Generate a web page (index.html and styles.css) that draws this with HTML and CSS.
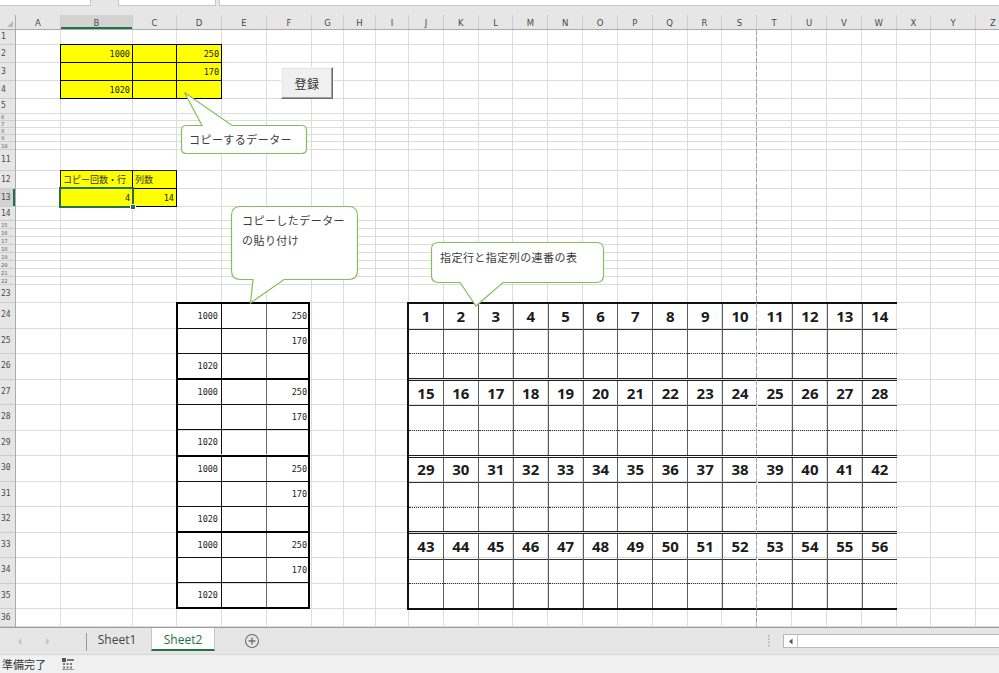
FILE: index.html
```html
<!DOCTYPE html>
<html lang="ja">
<head>
<meta charset="utf-8">
<title>Excel</title>
<link rel="stylesheet" href="styles.css">
</head>
<body>
<div class="app">
  <div class="top"><div class="box b1"></div><div class="box b2"></div><div class="box b3"></div></div>

  <div class="sheet">
    <div class="corner"><svg width="15" height="14" viewBox="0 0 15 14"><path d="M13 6 L13 12 L7 12 Z" fill="#b9b9b9"/></svg></div>

    <div class="cheads">
      <div>A</div><div class="sel">B</div><div>C</div><div>D</div><div>E</div><div>F</div><div>G</div><div>H</div><div>I</div><div>J</div><div>K</div><div>L</div><div>M</div><div>N</div><div>O</div><div>P</div><div>Q</div><div>R</div><div>S</div><div>T</div><div>U</div><div>V</div><div>W</div><div>X</div><div>Y</div><div class="zc">Z</div>
    </div>

    <div class="rheads">
      <div>1</div><div>2</div><div>3</div><div>4</div><div>5</div><div class="t">6</div><div class="t">7</div><div class="t">8</div><div class="t">9</div><div class="t">10</div><div>11</div><div>12</div><div class="sel">13</div><div>14</div><div class="t">15</div><div class="t">16</div><div class="t">17</div><div class="t">18</div><div class="t">19</div><div class="t">20</div><div class="t">21</div><div class="t">22</div><div>23</div><div>24</div><div>25</div><div>26</div><div>27</div><div>28</div><div>29</div><div>30</div><div>31</div><div>32</div><div>33</div><div>34</div><div>35</div><div>36</div>
    </div>

    <div class="hlines">
      <div></div><div></div><div></div><div></div><div></div><div></div><div></div><div></div><div></div><div></div><div></div><div></div><div></div><div></div><div></div><div></div><div></div><div></div><div></div><div></div><div></div><div></div><div></div><div></div><div></div><div></div><div></div><div></div><div></div><div></div><div></div><div></div><div></div><div></div><div></div><div></div>
    </div>

    <div class="vlines">
      <div></div><div></div><div></div><div></div><div></div><div></div><div></div><div></div><div></div><div></div><div></div><div></div><div></div><div></div><div></div><div></div><div></div><div></div><div></div><div></div><div></div><div></div><div></div><div></div><div></div><div></div>
    </div>

    <div class="yb">
      <div>1000</div><div></div><div>250</div>
      <div></div><div></div><div>170</div>
      <div>1020</div><div></div><div></div>
    </div>

    <div class="pb">
      <div class="lbl">コピー回数・行</div><div class="lbl">列数</div>
      <div>4</div><div>14</div>
    </div>

    <div class="selbox"><i class="handle"></i></div>

    <div class="lt">
      <div class="lg">
        <div class="lr"><span>1000</span><span></span><span>250</span></div>
        <div class="lr"><span></span><span></span><span>170</span></div>
        <div class="lr"><span>1020</span><span></span><span></span></div>
      </div>
      <div class="lg">
        <div class="lr"><span>1000</span><span></span><span>250</span></div>
        <div class="lr"><span></span><span></span><span>170</span></div>
        <div class="lr"><span>1020</span><span></span><span></span></div>
      </div>
      <div class="lg">
        <div class="lr"><span>1000</span><span></span><span>250</span></div>
        <div class="lr"><span></span><span></span><span>170</span></div>
        <div class="lr"><span>1020</span><span></span><span></span></div>
      </div>
      <div class="lg">
        <div class="lr"><span>1000</span><span></span><span>250</span></div>
        <div class="lr"><span></span><span></span><span>170</span></div>
        <div class="lr"><span>1020</span><span></span><span></span></div>
      </div>
    </div>

    <div class="rt">
      <div class="g">
        <div class="c"><b>1</b><i></i><i></i></div><div class="c"><b>2</b><i></i><i></i></div><div class="c"><b>3</b><i></i><i></i></div><div class="c"><b>4</b><i></i><i></i></div><div class="c"><b>5</b><i></i><i></i></div><div class="c"><b>6</b><i></i><i></i></div><div class="c"><b>7</b><i></i><i></i></div><div class="c"><b>8</b><i></i><i></i></div><div class="c"><b>9</b><i></i><i></i></div><div class="c s"><b>10</b><i></i><i></i></div><div class="c"><b>11</b><i></i><i></i></div><div class="c"><b>12</b><i></i><i></i></div><div class="c"><b>13</b><i></i><i></i></div><div class="c"><b>14</b><i></i><i></i></div>
      </div>
      <div class="g">
        <div class="c"><b>15</b><i></i><i></i></div><div class="c"><b>16</b><i></i><i></i></div><div class="c"><b>17</b><i></i><i></i></div><div class="c"><b>18</b><i></i><i></i></div><div class="c"><b>19</b><i></i><i></i></div><div class="c"><b>20</b><i></i><i></i></div><div class="c"><b>21</b><i></i><i></i></div><div class="c"><b>22</b><i></i><i></i></div><div class="c"><b>23</b><i></i><i></i></div><div class="c s"><b>24</b><i></i><i></i></div><div class="c"><b>25</b><i></i><i></i></div><div class="c"><b>26</b><i></i><i></i></div><div class="c"><b>27</b><i></i><i></i></div><div class="c"><b>28</b><i></i><i></i></div>
      </div>
      <div class="g">
        <div class="c"><b>29</b><i></i><i></i></div><div class="c"><b>30</b><i></i><i></i></div><div class="c"><b>31</b><i></i><i></i></div><div class="c"><b>32</b><i></i><i></i></div><div class="c"><b>33</b><i></i><i></i></div><div class="c"><b>34</b><i></i><i></i></div><div class="c"><b>35</b><i></i><i></i></div><div class="c"><b>36</b><i></i><i></i></div><div class="c"><b>37</b><i></i><i></i></div><div class="c s"><b>38</b><i></i><i></i></div><div class="c"><b>39</b><i></i><i></i></div><div class="c"><b>40</b><i></i><i></i></div><div class="c"><b>41</b><i></i><i></i></div><div class="c"><b>42</b><i></i><i></i></div>
      </div>
      <div class="g">
        <div class="c"><b>43</b><i></i><i></i></div><div class="c"><b>44</b><i></i><i></i></div><div class="c"><b>45</b><i></i><i></i></div><div class="c"><b>46</b><i></i><i></i></div><div class="c"><b>47</b><i></i><i></i></div><div class="c"><b>48</b><i></i><i></i></div><div class="c"><b>49</b><i></i><i></i></div><div class="c"><b>50</b><i></i><i></i></div><div class="c"><b>51</b><i></i><i></i></div><div class="c s"><b>52</b><i></i><i></i></div><div class="c"><b>53</b><i></i><i></i></div><div class="c"><b>54</b><i></i><i></i></div><div class="c"><b>55</b><i></i><i></i></div><div class="c"><b>56</b><i></i><i></i></div>
      </div>
    </div>

    <div class="btn">登録</div>

    <svg class="ov" width="999" height="673" viewBox="0 0 999 673">
      <line x1="756.5" y1="30" x2="756.5" y2="627" stroke="#a3a3a3" stroke-width="1" stroke-dasharray="5 2"/>
      <path d="M186.5,125.5 H202 L184.5,92.5 L232,125.5 H301.5 Q306.5,125.5 306.5,130.5 V148.5 Q306.5,153.5 301.5,153.5 H186.5 Q181.5,153.5 181.5,148.5 V130.5 Q181.5,125.5 186.5,125.5 Z" fill="#fff" stroke="#86bd5e" stroke-width="1.2"/>
      <path d="M240.5,206.5 H348.5 Q357.5,206.5 357.5,215.5 V270.5 Q357.5,279.5 348.5,279.5 H284 L250.5,303 L253,279.5 H240.5 Q231.5,279.5 231.5,270.5 V215.5 Q231.5,206.5 240.5,206.5 Z" fill="#fff" stroke="#86bd5e" stroke-width="1.2"/>
      <path d="M438.5,242.5 H596.5 Q603.5,242.5 603.5,249.5 V275.5 Q603.5,282.5 596.5,282.5 H503 L476,306 L460,282.5 H438.5 Q431.5,282.5 431.5,275.5 V249.5 Q431.5,242.5 438.5,242.5 Z" fill="#fff" stroke="#86bd5e" stroke-width="1.2"/>
    </svg>
    <div class="note n1">コピーするデーター</div>
    <div class="note n2">コピーしたデーター<br>の貼り付け</div>
    <div class="note n3">指定行と指定列の連番の表</div>
  </div>

  <div class="tabbar">
    <div class="nav"><svg width="86" height="26" viewBox="0 0 86 26"><path d="M21.5 10 L18 13.5 L21.5 17 Z" fill="#c4c4c4"/><path d="M46 10 L49.5 13.5 L46 17 Z" fill="#c4c4c4"/></svg></div>
    <div class="tsep"></div>
    <div class="tab">Sheet1</div>
    <div class="tab on">Sheet2</div>
    <div class="add"><svg width="16" height="16" viewBox="0 0 16 16"><circle cx="8" cy="8" r="6.5" fill="none" stroke="#707070" stroke-width="1.1"/><path d="M8 4.6V11.4M4.6 8H11.4" stroke="#707070" stroke-width="1.3"/></svg></div>
    <div class="fill"></div>
    <div class="dots"><svg width="4" height="12" viewBox="0 0 4 12"><rect x="1" y="0" width="1.5" height="1.5" fill="#a8a8a8"/><rect x="1" y="3.3" width="1.5" height="1.5" fill="#a8a8a8"/><rect x="1" y="6.6" width="1.5" height="1.5" fill="#a8a8a8"/><rect x="1" y="9.9" width="1.5" height="1.5" fill="#a8a8a8"/></svg></div>
    <div class="hscroll"><div class="larr"><svg width="6" height="7" viewBox="0 0 6 7"><path d="M4.5 0.5 L1 3.5 L4.5 6.5 Z" fill="#555"/></svg></div></div>
  </div>

  <div class="status">
    <span class="ready">準備完了</span>
    <svg class="sicon" width="12" height="12" viewBox="0 0 12 12"><rect x="0" y="0" width="4" height="4" fill="#555"/><rect x="5" y="1" width="7" height="2" fill="#777"/><rect x="1" y="5" width="2" height="2" fill="#777"/><rect x="4.5" y="5" width="2" height="2" fill="#777"/><rect x="8" y="5" width="2" height="2" fill="#777"/><rect x="1" y="8.5" width="2" height="2" fill="#777"/><rect x="4.5" y="8.5" width="2" height="2" fill="#777"/><rect x="8" y="8.5" width="2" height="2" fill="#777"/><rect x="0" y="11" width="12" height="1" fill="#999"/></svg>
  </div>
</div>
</body>
</html>
```

FILE: styles.css
```css
* { box-sizing: border-box; margin: 0; padding: 0; }

:root {
  --cols: 45px 72px 44px 45px 45px 45px 32px 32px 33px repeat(14, 34.83px) 34.5px 45px 45px;
  --rows: 15px 18px 18px 18px 15px 7px 7px 7px 7px 8px 21px 18px 18px 14px repeat(8, 8px) 18px repeat(12, 25.5px) 18px;
}

body {
  width: 999px;
  height: 673px;
  overflow: hidden;
  background: #fff;
  font-family: "Noto Sans", "Noto Sans CJK JP", sans-serif;
}

.app { display: flex; flex-direction: column; height: 673px; }

/* formula-bar remnant at the top */
.top { height: 15px; flex: none; background: #e6e6e6; display: flex; align-items: flex-start; }
.box { height: 6px; background: #fff; border: 1px solid #c6c6c6; border-top: 0; }
.b1 { width: 91px; border-left: 0; }
.b2 { width: 98px; margin-left: 27px; }
.b3 { flex: 1; margin-left: 3px; border-right: 0; }

/* worksheet */
.sheet {
  height: 612px;
  flex: none;
  position: relative;
  overflow: hidden;
  display: grid;
  grid-template-columns: 16px var(--cols);
  grid-template-rows: 15px var(--rows);
  background: #fff;
}

.corner {
  grid-column: 1; grid-row: 1;
  background: #e6e6e6;
  border-right: 1px solid #ababab;
  border-bottom: 1px solid #ababab;
}
.corner svg { display: block; }

.cheads {
  grid-column: 2 / -1; grid-row: 1;
  display: grid;
  grid-template-columns: var(--cols);
  background: #e6e6e6;
  border-bottom: 1px solid #ababab;
}
.cheads div {
  border-right: 1px solid #cdcdcd;
  display: flex; align-items: center; justify-content: center;
  font: 8.5px "DejaVu Sans", sans-serif;
  color: #4a4a4a;
  padding-top: 1px;
}
.cheads .zc { justify-content: flex-start; padding-left: 14px; }
.cheads .sel { background: #d3d3d3; box-shadow: inset 0 -2px 0 #217346; }

.rheads {
  grid-column: 1; grid-row: 2 / -1;
  display: grid;
  grid-template-rows: var(--rows);
  background: #e6e6e6;
  border-right: 1px solid #ababab;
}
.rheads div {
  border-bottom: 1px solid #cdcdcd;
  display: flex; align-items: center;
  padding-left: 1px;
  overflow: hidden;
  font: 8px/1 "DejaVu Sans Mono", monospace;
  color: #4a4a4a;
}
.rheads .t { font-size: 5.5px; line-height: 6px; color: #6a6a6a; }
.rheads .sel { background: #d3d3d3; box-shadow: inset -2px 0 0 #217346; }

.hlines {
  grid-column: 2 / -1; grid-row: 2 / -1;
  display: grid;
  grid-template-rows: var(--rows);
}
.hlines div { border-bottom: 1px solid #dcdcdc; }

.vlines {
  grid-column: 2 / -1; grid-row: 2 / -1;
  display: grid;
  grid-template-columns: var(--cols);
}
.vlines div { border-right: 1px solid #dcdcdc; }

/* yellow source block B2:D4 */
.yb {
  grid-column: 3 / 6; grid-row: 3 / 6;
  margin: -1px 0 0 -1px;
  border-top: 1px solid #000;
  border-left: 1px solid #000;
  display: grid;
  grid-template-columns: 72px 44px 45px;
  grid-template-rows: repeat(3, 18px);
}
.yb div, .pb div {
  background: #ffff00;
  border-right: 1px solid #000;
  border-bottom: 1px solid #000;
  display: flex; align-items: center; justify-content: flex-end;
  padding-right: 2px;
  font: 8.5px "DejaVu Sans Mono", monospace;
  color: #222;
}

/* parameter block B12:C13 */
.pb {
  grid-column: 3 / 5; grid-row: 13 / 15;
  margin: -1px 0 0 -1px;
  border-top: 1px solid #222;
  border-left: 1px solid #222;
  display: grid;
  grid-template-columns: 72px 44px;
  grid-template-rows: 18px 18px;
}
.pb .lbl {
  justify-content: flex-start;
  padding-left: 2px;
  font: 9px "Noto Sans CJK JP", sans-serif;
  color: #333;
  white-space: nowrap;
}

.selbox {
  grid-column: 3 / 4; grid-row: 14 / 15;
  margin: -2px -1px -1px -2px;
  border: 2px solid #217346;
  position: relative;
}
.handle {
  position: absolute;
  right: -4px; bottom: -4px;
  width: 6px; height: 6px;
  background: #217346;
  border: 1px solid #fff;
}

/* pasted table D24:F35 */
.lt {
  grid-column: 5 / 8; grid-row: 25 / 37;
  margin: -1px 2px 0 -1px;
  border: 2px solid #000;
  display: flex; flex-direction: column;
}
.lg { flex: 1; display: flex; flex-direction: column; border-bottom: 2px solid #000; }
.lg:last-child { border-bottom: 0; }
.lr {
  flex: 1;
  display: grid;
  grid-template-columns: 44px 45px 1fr;
  border-bottom: 1px solid #111;
}
.lr:last-child { border-bottom: 0; }
.lr span {
  border-right: 1px solid #111;
  display: flex; align-items: center; justify-content: flex-end;
  padding-right: 3px;
  font: 8.5px "DejaVu Sans Mono", monospace;
  color: #222;
}
.lr span:nth-child(2) { border-right-color: #6b6b6b; }
.lr span:last-child { border-right: 0; padding-right: 1px; }

/* numbered table J24:W35 */
.rt {
  grid-column: 11 / 25; grid-row: 25 / 37;
  margin: -1px 0 -1px -2px;
  border-top: 2px solid #111;
  border-left: 2px solid #111;
  border-bottom: 2px solid #111;
  display: flex; flex-direction: column;
}
.g { flex: 1; display: flex; border-bottom: 3px double #1e1e1e; }
.g:last-child { border-bottom: 0; }
.c {
  flex: 1;
  display: flex; flex-direction: column;
  border-right: 1px solid #5c5c5c;
}
.c.s { border-right-color: transparent; }
.c:last-child { border-right: 0; }
.c b {
  flex: 1;
  border-bottom: 1px solid #333;
  display: flex; align-items: center; justify-content: center;
  font: 700 15px "Noto Sans", sans-serif;
  color: #1b1b1b;
  padding-bottom: 1px;
}
.c i { flex: 1; border-bottom: 1px dotted #333; }
.c i:last-child { border-bottom: 0; }

/* form button */
.btn {
  position: absolute;
  left: 281px; top: 52px;
  width: 52px; height: 32px;
  background: #f0f0f0;
  border: 1px solid;
  border-color: #fafafa #6d6d6d #6d6d6d #fafafa;
  box-shadow: inset -1px -1px 0 #a0a0a0, inset 1px 1px 0 #e6e6e6;
  display: flex; align-items: center; justify-content: center;
  font: 12px "Noto Sans CJK JP", sans-serif;
  color: #333;
  letter-spacing: .5px;
}

/* callouts */
.ov {
  position: absolute;
  left: 0; top: -15px;
  pointer-events: none;
}
.note {
  position: absolute;
  font: 11px/20px "Noto Sans CJK JP", sans-serif;
  letter-spacing: .45px;
  color: #3c3c3c;
  white-space: nowrap;
}
.n1 { left: 189px; top: 114px; }
.n2 { left: 242px; top: 196px; line-height: 19.5px; }
.n3 { left: 440px; top: 232px; }

/* sheet tabs */
.tabbar {
  height: 27px; flex: none;
  background: #e6e6e6;
  border-top: 1px solid #9d9d9d;
  display: flex;
  align-items: center;
}
.nav { width: 86px; height: 26px; }
.nav svg { display: block; }
.tsep { width: 1px; height: 18px; background: #9a9a9a; margin-top: 2px; }
.tab {
  width: 64px; height: 23px;
  align-self: flex-start;
  display: flex; align-items: center; justify-content: center;
  font: 12px "Open Sans", sans-serif;
  color: #444;
  padding-right: 4px;
}
.tab.on {
  background: #fff;
  border-left: 1px solid #c6c6c6;
  border-right: 1px solid #c6c6c6;
  border-bottom: 2px solid #217346;
  color: #217346;
  padding-right: 0;
  padding-top: 1px;
}
.add { width: 74px; display: flex; justify-content: center; }
.add svg { display: block; }
.fill { flex: 1; }
.dots { width: 14px; display: flex; justify-content: center; }
.dots svg { display: block; }
.hscroll {
  width: 216px; height: 14px;
  margin-left: 7px;
  background: #fff;
  border: 1px solid #b9b9b9;
  border-right: 0;
  display: flex;
}
.larr {
  width: 14px;
  border-right: 1px solid #c9c9c9;
  display: flex; align-items: center; justify-content: center;
}
.larr svg { display: block; }

/* status bar */
.status {
  height: 19px; flex: none;
  background: #f0f0f0;
  border-top: 1px solid #d6d6d6;
  display: flex; align-items: center;
}
.ready {
  font: 11px "Noto Sans CJK JP", sans-serif;
  color: #333;
  padding-left: 2px;
  width: 62px;
}
.sicon { display: block; }
```
